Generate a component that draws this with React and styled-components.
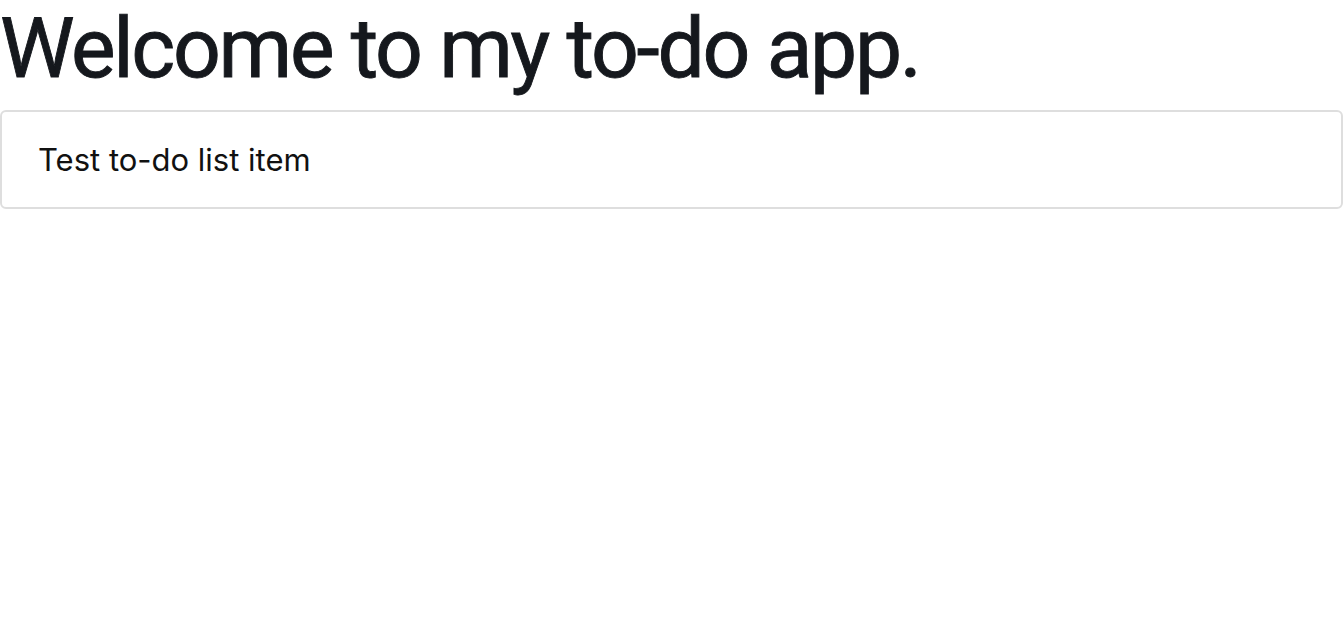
import React from 'react'
import styled, { createGlobalStyle } from 'styled-components'

const GlobalStyle = createGlobalStyle`
  body {
    margin: 0;
    background: #fff;
    font-family: Inter, "Liberation Sans", sans-serif;
  }
`

const Page = styled.div`
  display: flex;
  flex-direction: column;
`

const Title = styled.h1`
  margin: 0;
  height: 102px;
  font-family: Roboto, "Liberation Sans", sans-serif;
  font-size: 84px;
  font-weight: 400;
  line-height: 98px;
  letter-spacing: -2.3px;
  color: #15181d;
  -webkit-text-stroke: 0.9px #15181d;
  white-space: nowrap;
`

const ItemCard = styled.div`
  box-sizing: border-box;
  height: 99px;
  width: 1343px;
  margin-top: 8px;
  border: 2px solid #dedede;
  border-radius: 6px;
  display: flex;
  align-items: center;
  padding: 0 36px;
`

const ItemText = styled.span`
  font-size: 31px;
  color: #111;
`

const App = () => {
  return (
    <Page>
      <GlobalStyle />
      <Title>Welcome to my to-do app.</Title>
      <ItemCard>
        <ItemText>Test to-do list item</ItemText>
      </ItemCard>
    </Page>
  )
}

export default App
